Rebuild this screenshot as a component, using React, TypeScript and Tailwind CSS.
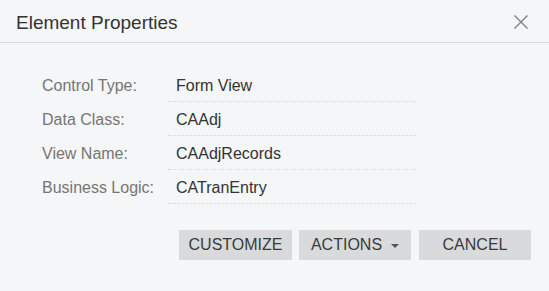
const rows = [
  { label: 'Control Type:', value: 'Form View' },
  { label: 'Data Class:', value: 'CAAdj' },
  { label: 'View Name:', value: 'CAAdjRecords' },
  { label: 'Business Logic:', value: 'CATranEntry' },
]

function CloseIcon() {
  return (
    <svg width="16" height="16" viewBox="0 0 16 16" className="text-[#808080]">
      <path d="M1.5 1.5 L14.5 14.5 M14.5 1.5 L1.5 14.5" stroke="currentColor" strokeWidth="1.4" fill="none" />
    </svg>
  )
}

export default function App() {
  return (
    <div className="w-[549px] h-[291px] bg-[#f5f6f8] font-['Liberation_Sans',Arial,sans-serif] overflow-hidden">
      <div className="h-[43px] flex items-start justify-between pl-4 pr-[20px] pt-[12px] border-b border-[#d5d6d8]">
        <h2 className="text-[19px] leading-[22px] text-[#333]">Element Properties</h2>
        <button type="button" className="mt-[2px]">
          <CloseIcon />
        </button>
      </div>

      <div className="pt-[25px] pl-[42px]">
        {rows.map((row) => (
          <div key={row.label} className="flex text-[16px] leading-[18px]">
            <div className="w-[126px] pt-[9px] pb-[7px] text-[#757575]">{row.label}</div>
            <div className="w-[248px] pt-[9px] pb-[6px] pl-2 text-[#333] border-b border-dotted border-[#d3d4d6]">
              {row.value}
            </div>
          </div>
        ))}
      </div>

      <div className="flex justify-end pr-[18px] mt-[26px]">
        <button
          type="button"
          className="w-[113px] h-[30px] bg-[#d9dadc] text-[16px] text-[#3a3a3a] flex items-center justify-center"
        >
          CUSTOMIZE
        </button>
        <button
          type="button"
          className="ml-[7px] w-[112px] h-[30px] bg-[#d9dadc] text-[16px] text-[#3a3a3a] flex items-center justify-center gap-[9px]"
        >
          ACTIONS
          <span className="w-0 h-0 border-l-[4px] border-r-[4px] border-t-[4px] border-l-transparent border-r-transparent border-t-[#555] mt-[1px]" />
        </button>
        <button
          type="button"
          className="ml-[8px] w-[112px] h-[30px] bg-[#d9dadc] text-[16px] text-[#3a3a3a] flex items-center justify-center"
        >
          CANCEL
        </button>
      </div>
    </div>
  )
}
